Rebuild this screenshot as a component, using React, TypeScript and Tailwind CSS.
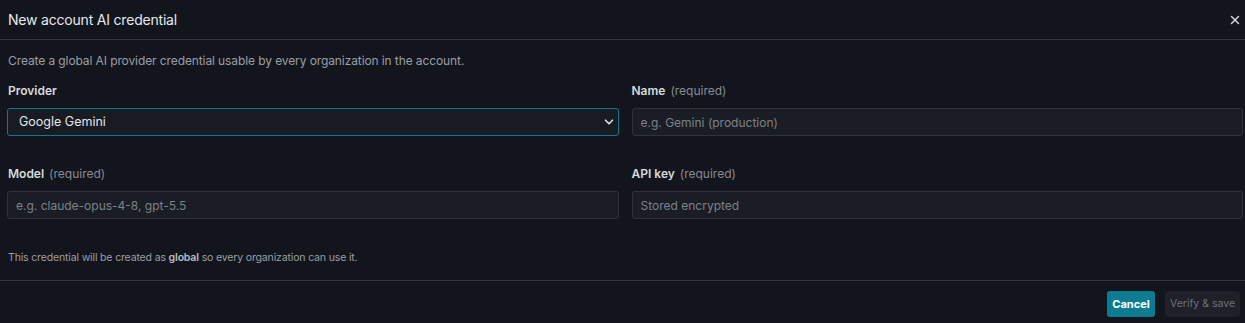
import React from 'react';
import { X, ChevronDown } from 'lucide-react';

const Label: React.FC<{ text: string; required?: boolean }> = ({ text, required }) => (
  <div className="h-[18px] mb-[8px] flex items-center gap-[5px] text-[12px] leading-[18px]">
    <span className="font-semibold text-[#d7dade]">{text}</span>
    {required && <span className="text-[#868b94]">(required)</span>}
  </div>
);

const Field: React.FC<{ placeholder: string }> = ({ placeholder }) => (
  <input
    placeholder={placeholder}
    className="w-full h-[28px] px-[8px] rounded-[3px] bg-[#1a1d24] border border-[#2e323a] text-[12px] text-[#d7dade] placeholder:text-[#7d828b] outline-none"
  />
);

export default function App() {
  return (
    <div
      className="w-[1245px] h-[323px] bg-[#12151c] flex flex-col text-[#e4e6ea] overflow-hidden"
      style={{ fontFamily: 'Inter, "Noto Sans", sans-serif' }}
    >
      {/* header */}
      <div className="h-[40px] shrink-0 flex items-center justify-between pl-[8px] pr-[2px] border-b border-[#33373f]">
        <h2 className="text-[14px] font-normal tracking-[-0.2px] text-[#e6e8eb]">New account AI credential</h2>
        <button className="w-[14px] h-[14px] mr-[1px] flex items-center justify-center text-[#d0d3d8]">
          <X className="w-[14px] h-[14px]" strokeWidth={2.5} />
        </button>
      </div>

      {/* body */}
      <div className="flex-1 pl-[7px] pr-[2px]">
        <p className="mt-[12px] pl-[1px] text-[12px] leading-[18px] tracking-[-0.1px] text-[#9a9fa7]">
          Create a global AI provider credential usable by every organization in the account.
        </p>

        <div className="mt-[12px] grid grid-cols-2 gap-x-[13px] gap-y-[29px]">
          <div>
            <div className="pl-[1px]"><Label text="Provider" /></div>
            <div className="relative h-[28px] rounded-[3px] bg-[#181b22] border border-[#0f7a8c] flex items-center pl-[11px] pr-[2px]">
              <span className="flex-1 text-[12.5px] text-[#e4e6ea]">Google Gemini</span>
              <ChevronDown className="w-[14px] h-[14px] text-[#d7dade]" strokeWidth={3} />
            </div>
          </div>
          <div>
            <Label text="Name" required />
            <Field placeholder="e.g. Gemini (production)" />
          </div>
          <div>
            <div className="pl-[1px]"><Label text="Model" required /></div>
            <Field placeholder="e.g. claude-opus-4-8, gpt-5.5" />
          </div>
          <div>
            <Label text="API key" required />
            <Field placeholder="Stored encrypted" />
          </div>
        </div>

        <p className="mt-[31px] pl-[1px] text-[10.5px] leading-[16px] tracking-[-0.15px] text-[#9a9fa7]">
          This credential will be created as <span className="font-semibold text-[#b9bdc4]">global</span> so every organization can use it.
        </p>
      </div>

      {/* footer */}
      <div className="h-[43px] shrink-0 border-t border-[#33373f] flex items-start justify-end gap-[10px] pt-[10px] pr-[5px]">
        <button className="h-[26px] w-[48px] rounded-[3px] bg-[#0d7b92] text-[11px] font-bold text-white">
          Cancel
        </button>
        <button disabled className="h-[26px] w-[75px] rounded-[3px] bg-[#1e2128] text-[10.5px] text-[#6d727b]">
          Verify &amp; save
        </button>
      </div>
    </div>
  );
}
